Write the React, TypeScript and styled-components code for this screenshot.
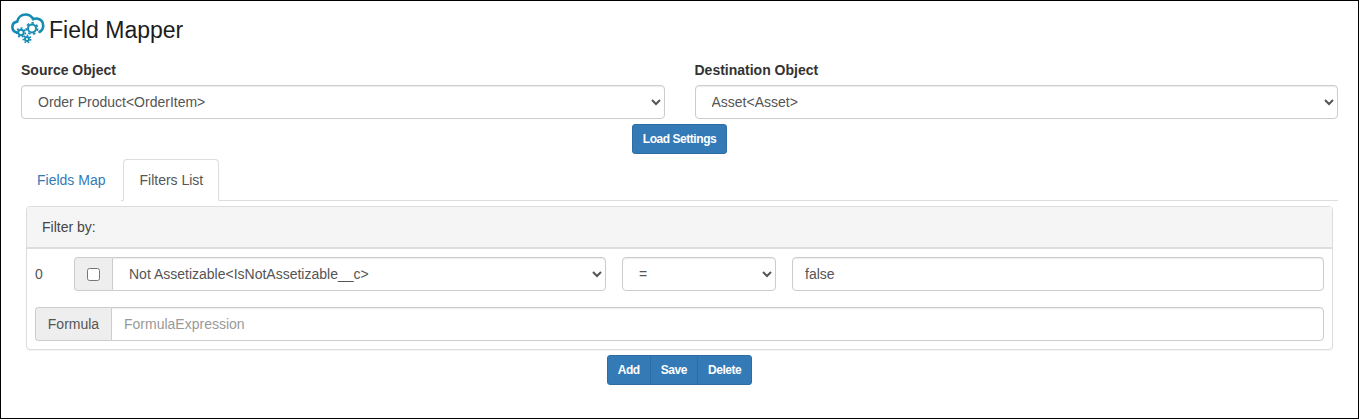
import React from "react"
import styled, { createGlobalStyle } from "styled-components"

const GlobalStyle = createGlobalStyle`
  html, body {
    margin: 0;
    padding: 0;
    background: #fff;
  }
  * {
    box-sizing: border-box;
  }
  body {
    font-family: "Liberation Sans", Arial, sans-serif;
    font-size: 14px;
    line-height: 20px;
    color: #333;
  }
`

const Page = styled.div`
  width: 1359px;
  height: 419px;
  border: 1px solid #000;
  overflow: hidden;
`

const Header = styled.header`
  display: flex;
  align-items: center;
  gap: 4px;
  height: 59px;
  padding: 0 0 2px 10px;
`

const Title = styled.h1`
  margin: 0;
  font-size: 23px;
  font-weight: 400;
  line-height: 28px;
  color: #1c1c1c;
`

const Content = styled.div`
  padding: 0 20px;
`

const ObjectGrid = styled.div`
  display: grid;
  grid-template-columns: 1fr 1fr;
  column-gap: 30px;
`

const Label = styled.label`
  display: block;
  margin-bottom: 5px;
  font-weight: 700;
`

const Select = styled.select<{ $joined?: boolean }>`
  display: block;
  width: 100%;
  height: 34px;
  padding: 6px 12px;
  font-family: inherit;
  font-size: 14px;
  color: #555;
  background: #fff;
  border: 1px solid #ccc;
  border-radius: ${(p) => (p.$joined ? "0 4px 4px 0" : "4px")};
  box-shadow: inset 0 1px 1px rgba(0, 0, 0, 0.075);
`

const Input = styled.input<{ $joined?: boolean }>`
  display: block;
  width: 100%;
  min-width: 0;
  height: 34px;
  padding: 6px 12px;
  font-family: inherit;
  font-size: 14px;
  color: #555;
  background: #fff;
  border: 1px solid #ccc;
  border-radius: ${(p) => (p.$joined ? "0 4px 4px 0" : "4px")};
  box-shadow: inset 0 1px 1px rgba(0, 0, 0, 0.075);

  &::placeholder {
    color: #999;
    opacity: 1;
  }
`

const Centered = styled.div`
  display: flex;
  justify-content: center;
  margin-top: 5px;
`

const Button = styled.button`
  height: 30px;
  padding: 0 10px;
  font-family: inherit;
  font-size: 12px;
  font-weight: 700;
  line-height: 18px;
  letter-spacing: -0.45px;
  color: #fff;
  background: #337ab7;
  border: 1px solid #2e6da4;
  border-radius: 3px;
`

const ButtonGroup = styled.div`
  display: flex;

  ${Button} {
    border-radius: 0;
    margin-left: -1px;
  }
  ${Button}:first-child {
    border-radius: 3px 0 0 3px;
    margin-left: 0;
  }
  ${Button}:last-child {
    border-radius: 0 3px 3px 0;
  }
`

const Tabs = styled.ul`
  display: flex;
  height: 42px;
  margin: 5px 0 0;
  padding: 0;
  list-style: none;
  border-bottom: 1px solid #ddd;
`

const Tab = styled.li<{ $active?: boolean }>`
  height: 42px;
  margin-right: 2px;
  padding: 10px 15px;
  color: ${(p) => (p.$active ? "#555" : "#337ab7")};
  background: #fff;
  border: 1px solid ${(p) => (p.$active ? "#ddd" : "transparent")};
  border-bottom-color: ${(p) => (p.$active ? "#fff" : "transparent")};
  border-radius: 4px 4px 0 0;
`

const Panel = styled.section`
  margin: 5px 5px 0;
  background: #fff;
  border: 1px solid #ddd;
  border-radius: 4px;
  box-shadow: 0 1px 1px rgba(0, 0, 0, 0.05);
`

const PanelHeading = styled.div`
  height: 42px;
  padding: 10px 15px;
  color: #444;
  background: #f5f5f5;
  border-bottom: 2px solid #ddd;
  border-radius: 3px 3px 0 0;
`

const PanelBody = styled.div`
  display: flex;
  flex-direction: column;
  gap: 16px;
  padding: 8px 8px 8px;
`

const FilterRow = styled.div`
  display: grid;
  grid-template-columns: 23px 1fr 154px 1fr;
  column-gap: 16px;
  align-items: center;
`

const RowIndex = styled.span`
  color: #555;
`

const InputGroup = styled.div`
  display: flex;
  min-width: 0;
`

const Addon = styled.span<{ $width: number }>`
  display: flex;
  align-items: center;
  justify-content: center;
  flex: 0 0 ${(p) => p.$width}px;
  height: 34px;
  color: #555;
  background: #eee;
  border: 1px solid #ccc;
  border-right: 0;
  border-radius: 4px 0 0 4px;
`

const Checkbox = styled.input`
  width: 13px;
  height: 13px;
  margin: 0;
`

const Gear = ({ cx, cy, r }: { cx: number; cy: number; r: number }) => {
  const outer = r + 1.7
  const tooth = (2 * Math.PI * outer) / 14
  return (
    <g>
      <circle cx={cx} cy={cy} r={outer} strokeWidth="1.6" strokeDasharray={`${tooth} ${tooth}`} />
      <circle cx={cx} cy={cy} r={r} strokeWidth="2" fill="#fff" />
    </g>
  )
}

const CloudLogo = () => (
  <svg width="34" height="33" viewBox="0 0 34 33" fill="none" stroke="#168bb3">
    <path
      d="M6 19.5C3.2 19 1.4 16.8 1.4 14C1.4 11 3.5 9 6.2 8.6C7 4.3 10.5 1.5 14.5 1.5C18 1.5 20.6 3.4 22.2 6.2C23.4 5.5 24.6 5.3 26 5.5C29.6 6.2 32.2 8.8 32.2 12.6C32.2 15.6 30.8 17.8 28.5 19"
      strokeWidth="2.6"
      strokeLinecap="round"
    />
    <Gear cx={21} cy={15.5} r={4} />
    <Gear cx={10} cy={19.5} r={2.7} />
    <Gear cx={16} cy={26} r={2} />
  </svg>
)

export default function App() {
  return (
    <Page>
      <GlobalStyle />
      <Header>
        <CloudLogo />
        <Title>Field Mapper</Title>
      </Header>
      <Content>
        <ObjectGrid>
          <div>
            <Label>Source Object</Label>
            <Select defaultValue="order">
              <option value="order">Order Product&lt;OrderItem&gt;</option>
            </Select>
          </div>
          <div>
            <Label>Destination Object</Label>
            <Select defaultValue="asset">
              <option value="asset">Asset&lt;Asset&gt;</option>
            </Select>
          </div>
        </ObjectGrid>
        <Centered>
          <Button>Load Settings</Button>
        </Centered>
        <Tabs>
          <Tab>Fields Map</Tab>
          <Tab $active>Filters List</Tab>
        </Tabs>
        <Panel>
          <PanelHeading>Filter by:</PanelHeading>
          <PanelBody>
            <FilterRow>
              <RowIndex>0</RowIndex>
              <InputGroup>
                <Addon $width={38}>
                  <Checkbox type="checkbox" />
                </Addon>
                <Select $joined defaultValue="flag">
                  <option value="flag">Not Assetizable&lt;IsNotAssetizable__c&gt;</option>
                </Select>
              </InputGroup>
              <Select defaultValue="eq">
                <option value="eq">=</option>
              </Select>
              <Input defaultValue="false" />
            </FilterRow>
            <InputGroup>
              <Addon $width={76}>Formula</Addon>
              <Input $joined placeholder="FormulaExpression" />
            </InputGroup>
          </PanelBody>
        </Panel>
        <Centered>
          <ButtonGroup>
            <Button>Add</Button>
            <Button>Save</Button>
            <Button>Delete</Button>
          </ButtonGroup>
        </Centered>
      </Content>
    </Page>
  )
}
